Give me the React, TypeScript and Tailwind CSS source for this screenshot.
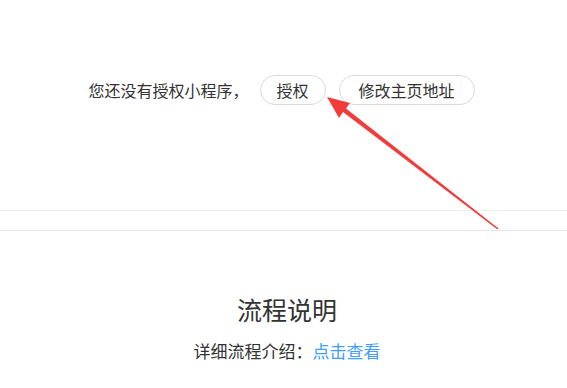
import React from "react";

const font = { fontFamily: '"Noto Sans CJK SC", "Noto Sans", sans-serif' };

// 红色箭头，指向授权按钮
const Arrow = () => (
  <svg
    className="absolute left-0 top-0 pointer-events-none"
    width="567"
    height="388"
    viewBox="0 0 567 388"
  >
    <polygon
      points="327,97 350,103 346,108.5 498.5,228.5 497.5,229.5 343,112 339,118"
      fill="#f23c3c"
    />
  </svg>
);

export default function App() {
  return (
    <div className="relative w-full min-h-[388px] bg-white text-[#333]" style={font}>
      <div className="h-[211px] border-b border-[#ededed] pt-[75px]">
        <div className="flex items-center justify-center text-[16px] pr-[4px]">
          <span>您还没有授权小程序，</span>
          <button className="ml-[11px] h-[30px] w-[66px] rounded-full border border-[#d9d9d9] bg-white text-[16px] text-[#333]">
            授权
          </button>
          <button className="ml-[13px] h-[30px] w-[136px] rounded-full border border-[#d9d9d9] bg-white text-[16px] text-[#333]">
            修改主页地址
          </button>
        </div>
      </div>
      <div className="h-[20px] border-b border-[#e6e6e6]" />
      <div className="flex flex-col items-center pt-[61px] pl-[7px]">
        <h2 className="text-[25px] leading-[34px]">流程说明</h2>
        <p className="mt-[13px] text-[17px] leading-[24px]">
          详细流程介绍：<a className="text-[#409eff]">点击查看</a>
        </p>
      </div>
      <Arrow />
    </div>
  );
}
